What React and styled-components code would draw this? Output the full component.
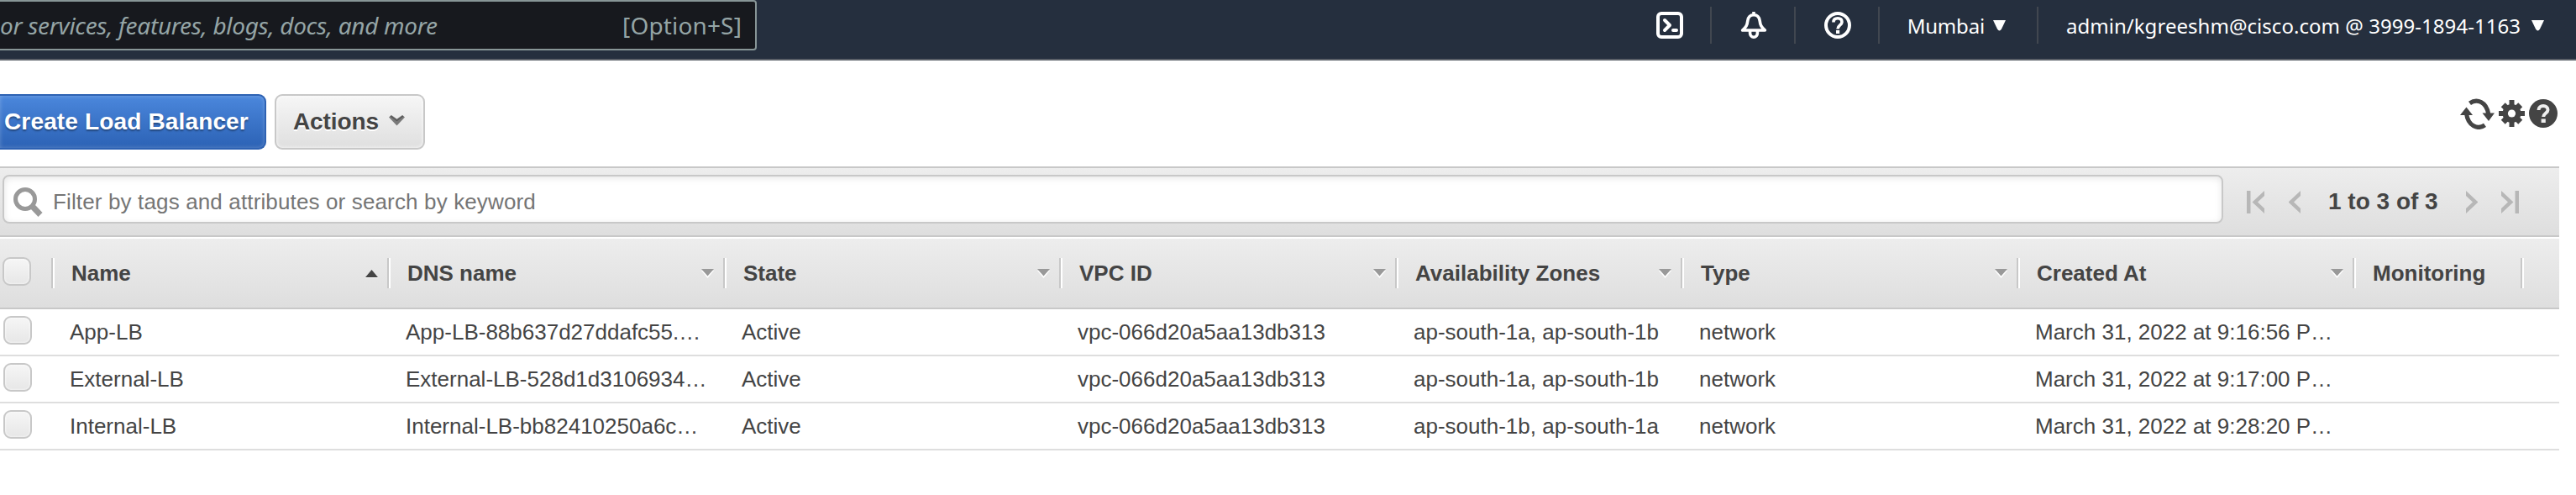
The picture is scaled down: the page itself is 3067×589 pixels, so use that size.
import React from 'react';
import styled, { createGlobalStyle } from 'styled-components';

const GlobalStyle = createGlobalStyle`
  * { box-sizing: border-box; }
  body {
    margin: 0;
    background: #fff;
    color: #444;
    font-family: "Liberation Sans", Arial, sans-serif;
    font-size: 26px;
    overflow: hidden;
  }
  svg { display: block; flex: none; }
`;

const Page = styled.div`
  width: 3067px;
  height: 589px;
  overflow: hidden;
`;

/* ---------- top navigation ---------- */

const NavBar = styled.header`
  display: flex;
  justify-content: space-between;
  height: 72px;
  background: #252f3e;
  border-bottom: 2px solid #5b6068;
  font-family: "Noto Sans", "Open Sans", sans-serif;
`;

const SearchBox = styled.div`
  display: flex;
  align-items: center;
  justify-content: space-between;
  width: 901px;
  height: 60px;
  padding-right: 16px;
  background: #17191e;
  border: 2px solid #879596;
  border-left: 0;
  border-radius: 0 4px 4px 0;
  color: #95a5a6;
  font-size: 28px;
  line-height: 56px;
  white-space: nowrap;
`;

const SearchHint = styled.span`
  font-style: italic;
  letter-spacing: -0.3px;
`;

const Shortcut = styled.span`
  letter-spacing: 0.15px;
`;

const NavItems = styled.nav`
  display: flex;
  align-items: center;
  height: 60px;
`;

const NavIcon = styled.div`
  display: flex;
  align-items: center;
  height: 44px;
  padding: 0 32px 0 34px;
  border-right: 2px solid #414750;
`;

const NavMenu = styled.div`
  display: flex;
  align-items: center;
  height: 44px;
  gap: ${(p) => p.$gap}px;
  padding-left: ${(p) => p.$left}px;
  padding-right: ${(p) => p.$right}px;
  border-right: ${(p) => (p.$last ? '0' : '2px solid #414750')};
  color: #fff;
  font-size: 24px;
  letter-spacing: ${(p) => p.$tracking}px;
  white-space: nowrap;
`;

/* ---------- actions ---------- */

const ActionBar = styled.section`
  display: flex;
  align-items: flex-start;
  height: 126px;
  padding-top: 40px;
`;

const Button = styled.button`
  display: flex;
  align-items: center;
  height: 66px;
  border: 2px solid #c8c8c8;
  border-radius: 9px;
  font: bold 28px/60px "Liberation Sans", Arial, sans-serif;
  white-space: nowrap;
`;

const PrimaryButton = styled(Button)`
  width: 317px;
  padding: 0 0 0 5px;
  border-color: #2e62b3;
  border-left: 0;
  border-radius: 0 9px 9px 0;
  background: linear-gradient(#4b87dc, #2c62b5);
  box-shadow: inset 0 0 5px rgba(255, 255, 255, 0.25);
  color: #fff;
  letter-spacing: 0.15px;
  text-shadow: 0 2px 2px rgba(0, 0, 0, 0.35);
`;

const SecondaryButton = styled(Button)`
  width: 179px;
  margin-left: 10px;
  padding: 0 22px 0 20px;
  justify-content: space-between;
  background: linear-gradient(#f6f6f6, #dfdfdf);
  box-shadow: inset 0 0 4px rgba(255, 255, 255, 0.9);
  color: #444;
  letter-spacing: -0.1px;
  text-shadow: 0 2px 0 #fff;

  svg { margin-top: -4px; }
`;

const Tools = styled.div`
  display: flex;
  align-items: center;
  gap: 5px;
  height: 38px;
  margin: 4px 22px 0 auto;
`;

/* ---------- filter ---------- */

const FilterBar = styled.section`
  display: flex;
  align-items: flex-start;
  width: 3047px;
  height: 84px;
  padding: 8px 0 0 3px;
  background: linear-gradient(#ededed, #dedede);
  border-top: 2px solid #c8c8c8;
  border-bottom: 2px solid #c8c8c8;
`;

const FilterInput = styled.div`
  display: flex;
  align-items: center;
  gap: 12px;
  width: 2644px;
  height: 58px;
  padding: 6px 0 0 11px;
  background: #fff;
  border: 2px solid #c8c8c8;
  border-radius: 8px;
  box-shadow: inset 0 2px 8px rgba(0, 0, 0, 0.1);
  color: #757575;
  letter-spacing: 0.14px;
  white-space: nowrap;
`;

const Pager = styled.div`
  display: flex;
  align-items: center;
  height: 64px;
  margin-left: 28px;
`;

const PageCount = styled.span`
  width: 133px;
  margin: 0 31px 0 33px;
  font-size: 28px;
  font-weight: bold;
  white-space: nowrap;
`;

const PagerStep = styled.span`
  margin-right: ${(p) => p.$space || 0}px;
`;

/* ---------- table ---------- */

const Table = styled.section`
  width: 3047px;
`;

const Row = styled.div`
  display: grid;
  grid-template-columns: 61px 400px 400px 400px 400px 340px 400px 400px 200px 1fr;
  align-items: center;
  height: 56px;
  border-bottom: 2px solid #dedede;
`;

const HeaderRow = styled(Row)`
  height: 86px;
  background: linear-gradient(#ededed, #dedede);
  border-top: 2px solid #fff;
  border-bottom-color: #c8c8c8;
  font-weight: bold;
`;

const HeaderCell = styled.div`
  display: flex;
  align-items: center;
  height: 36px;
  padding: 0 11px 0 22px;
  border-left: 2px solid #c8c8c8;
  box-shadow: inset 2px 0 0 #fff;
  white-space: nowrap;

  svg { margin-left: auto; }
`;

const Cell = styled.div`
  padding-left: 22px;
  white-space: nowrap;
`;

const CheckCell = styled.div`
  height: 34px;
  padding-left: ${(p) => (p.$header ? 3 : 4)}px;
  margin-top: -4px;
`;

const Checkbox = styled.div`
  width: 34px;
  height: 34px;
  background: linear-gradient(#f6f6f6, #e7e7e7);
  border: 2px solid #c8c8c8;
  border-radius: 9px;
  box-shadow: inset 0 0 3px #fff;
`;

/* ---------- icons ---------- */

const TerminalIcon = () => (
  <svg width="32" height="32" viewBox="0 0 32 32" fill="none" stroke="#fff" strokeWidth="4" strokeLinecap="round" strokeLinejoin="round">
    <rect x="2" y="2" width="28" height="28" rx="4" />
    <path d="M10 10l6 6-6 6M20 22h4" />
  </svg>
);

const BellIcon = () => (
  <svg width="32" height="32" viewBox="0 0 32 32" fill="none" stroke="#fff" strokeWidth="3.6" strokeLinejoin="round">
    <path d="M16 0v4" />
    <path d="M16 3.8c-4 0-6.6 2.6-7.2 7C8.200 16 7 18 2.600 22h26.800C25 18 23.800 16 23.200 10.800 22.600 6.400 20 3.800 16 3.800z" />
    <path d="M11.600 22v3.600a4.400 4.600 0 0 0 8.800 0V22" />
  </svg>
);

const HelpIcon = () => (
  <svg width="32" height="32" viewBox="0 0 32 32" fill="none" stroke="#fff" strokeWidth="4">
    <circle cx="16" cy="16" r="14" />
    <path d="M11 12.400c0-3 2-4.600 5-4.600s5 1.600 5 4.400c0 3.600-5 3.800-5 8.200" strokeWidth="3.600" />
    <path d="M14 24h4.200" strokeWidth="4" />
  </svg>
);

const CaretSolid = () => (
  <svg width="15" height="13" viewBox="0 0 15 13">
    <path d="M0 0h15l-5 10.500q-2.500 4-5 0z" fill="#fff" />
  </svg>
);

const ActionCaret = () => (
  <svg width="19" height="13" viewBox="0 0 19 13">
    <path d="M0 2.500L3 0l6.500 4.500L16 0l3 2.500-9.500 10z" fill="#7a7a7a" />
    <path d="M2 1l7.500 5.500L17 1" fill="none" stroke="#555" strokeWidth="1.200" />
  </svg>
);

const RefreshIcon = () => (
  <svg width="41" height="37" viewBox="0 0 41 37">
    <g fill="none" stroke="#444" strokeWidth="5.200">
      <path d="M11.500 5.800C20-.2 31.500 4 33.800 19" />
      <path d="M29.500 31.800C21 37.800 9.500 33 7.500 18" />
    </g>
    <path d="M26.500 17.500H41L34 27zM0 20h15L7.500 10.500z" fill="#444" />
  </svg>
);

const GearIcon = () => (
  <svg width="31" height="32" viewBox="0 0 31 32">
    <g fill="#444">
      <rect x="12.500" y="0" width="6" height="32" />
      <rect x="0" y="13" width="31" height="6" />
      <rect x="12" y="1.500" width="7" height="29" transform="rotate(45 15.500 16)" />
      <rect x="12" y="1.500" width="7" height="29" transform="rotate(-45 15.500 16)" />
      <circle cx="15.500" cy="16" r="11" />
    </g>
    <circle cx="15.500" cy="16" r="4.600" fill="#fff" />
  </svg>
);

const HelpSolidIcon = () => (
  <svg width="34" height="34" viewBox="0 0 34 34">
    <circle cx="17" cy="17" r="17" fill="#444" />
    <path d="M11.500 13c0-3.500 2.500-5 5.500-5s5.500 1.800 5.500 4.800c0 4-5.300 4-5.300 8.200" fill="none" stroke="#eee" strokeWidth="4" />
    <rect x="14.600" y="23.500" width="5.200" height="4.500" fill="#eee" />
  </svg>
);

const SearchIcon = () => (
  <svg width="35" height="35" viewBox="0 0 35 35" fill="none" stroke="#999">
    <circle cx="14" cy="14" r="11.500" strokeWidth="5" />
    <path d="M23 23l9 9.500" strokeWidth="7" />
  </svg>
);

const PageArrow = ({ flip, edge }) => (
  <svg width={edge ? 21 : 14} height="27" viewBox={edge ? '0 0 21 27' : '7 0 14 27'}>
    <g transform={flip ? (edge ? 'translate(21 0) scale(-1 1)' : 'translate(28 0) scale(-1 1)') : undefined} fill="#b7b7b7">
      {edge && <rect x="0" y="0" width="4.500" height="27" />}
      <path d="M21 0v6l-8 7.500 8 7.500v6L6.500 13.500z" />
    </g>
  </svg>
);

const SortIcon = ({ active }) => active ? (
  <svg width="15" height="12" viewBox="0 0 15 12">
    <path d="M0 11h15v1H0z" fill="#fff" />
    <path d="M0 11L7.500 2 15 11z" fill="#444" />
  </svg>
) : (
  <svg width="15" height="11" viewBox="0 0 15 11">
    <path d="M0 2h15L7.500 11z" fill="#fff" />
    <path d="M0 0h15L7.500 8.500z" fill="#999" />
  </svg>
);

/* ---------- data ---------- */

const columns = [
  { label: 'Name', sort: 'active' },
  { label: 'DNS name', sort: 'idle' },
  { label: 'State', sort: 'idle' },
  { label: 'VPC ID', sort: 'idle' },
  { label: 'Availability Zones', sort: 'idle' },
  { label: 'Type', sort: 'idle' },
  { label: 'Created At', sort: 'idle' },
  { label: 'Monitoring' },
  { label: '' },
];

const balancers = [
  ['App-LB', 'App-LB-88b637d27ddafc55.…', 'Active', 'vpc-066d20a5aa13db313', 'ap-south-1a, ap-south-1b', 'network', 'March 31, 2022 at 9:16:56 P…'],
  ['External-LB', 'External-LB-528d1d3106934…', 'Active', 'vpc-066d20a5aa13db313', 'ap-south-1a, ap-south-1b', 'network', 'March 31, 2022 at 9:17:00 P…'],
  ['Internal-LB', 'Internal-LB-bb82410250a6c…', 'Active', 'vpc-066d20a5aa13db313', 'ap-south-1b, ap-south-1a', 'network', 'March 31, 2022 at 9:28:20 P…'],
];

export default function App() {
  return (
    <Page>
      <GlobalStyle />
      <NavBar>
        <SearchBox>
          <SearchHint>or services, features, blogs, docs, and more</SearchHint>
          <Shortcut>[Option+S]</Shortcut>
        </SearchBox>
        <NavItems>
          <NavIcon><TerminalIcon /></NavIcon>
          <NavIcon><BellIcon /></NavIcon>
          <NavIcon><HelpIcon /></NavIcon>
          <NavMenu $left={33} $right={37} $gap={10} $tracking={-0.2}>Mumbai<CaretSolid /></NavMenu>
          <NavMenu $left={33} $right={38} $gap={13} $tracking={0.04} $last>admin/kgreeshm@cisco.com @ 3999-1894-1163<CaretSolid /></NavMenu>
        </NavItems>
      </NavBar>

      <ActionBar>
        <PrimaryButton>Create Load Balancer</PrimaryButton>
        <SecondaryButton>Actions<ActionCaret /></SecondaryButton>
        <Tools>
          <RefreshIcon />
          <GearIcon />
          <HelpSolidIcon />
        </Tools>
      </ActionBar>

      <FilterBar>
        <FilterInput>
          <SearchIcon />
          Filter by tags and attributes or search by keyword
        </FilterInput>
        <Pager>
          <PagerStep $space={29}><PageArrow edge /></PagerStep>
          <PagerStep><PageArrow /></PagerStep>
          <PageCount>1 to 3 of 3</PageCount>
          <PagerStep $space={28}><PageArrow flip /></PagerStep>
          <PagerStep><PageArrow flip edge /></PagerStep>
        </Pager>
      </FilterBar>

      <Table>
        <HeaderRow>
          <CheckCell $header><Checkbox /></CheckCell>
          {columns.map((c, i) => (
            <HeaderCell key={i}>
              {c.label}
              {c.sort && <SortIcon active={c.sort === 'active'} />}
            </HeaderCell>
          ))}
        </HeaderRow>
        {balancers.map((cells) => (
          <Row key={cells[0]}>
            <CheckCell><Checkbox /></CheckCell>
            {cells.map((text, i) => <Cell key={i}>{text}</Cell>)}
          </Row>
        ))}
      </Table>
    </Page>
  );
}
